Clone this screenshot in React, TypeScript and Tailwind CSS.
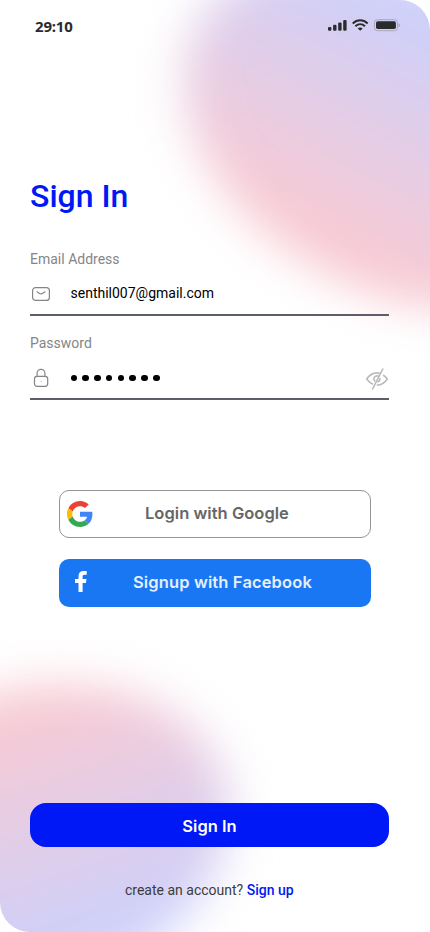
import React from "react";

function Backdrop() {
  return (
    <div className="pointer-events-none absolute inset-0">
      <div className="absolute left-[170px] top-[-25px] h-[316px] w-[456px] rotate-[28deg] rounded-[50%] bg-[linear-gradient(0deg,#f8cad3_10%,#ccd0fb_88%)] blur-[23px]" />
      <div className="absolute left-[-186px] top-[691px] h-[302px] w-[420px] rotate-[-18deg] rounded-[50%] bg-[linear-gradient(180deg,#f8cad3_8%,#ccd0fb_90%)] blur-[23px]" />
    </div>
  );
}

function StatusBar() {
  return (
    <header className="flex h-[54px] items-start justify-between pl-[35px] pr-[30px] pt-4">
      <span className="font-['Noto_Sans',sans-serif] text-[15px] font-bold leading-5 tracking-[-0.2px] text-[#2b2b2d]">29:10</span>
      <svg width="72" height="14" viewBox="0 0 72 14" className="mt-[2px]" fill="#2b2b2d">
        <rect x="0" y="8.9" width="3.4" height="3.9" rx="1.2" />
        <rect x="5.1" y="6.8" width="3.4" height="6" rx="1.2" />
        <rect x="10.2" y="4.4" width="3.4" height="8.4" rx="1.2" />
        <rect x="15.2" y="1.9" width="3.4" height="10.9" rx="1.2" />
        <g fill="none" stroke="#2b2b2d" strokeWidth="2">
          <path d="M24.7 5.4 C29.2 1.3 35.2 1.3 39.7 5.4" />
          <path d="M27.4 8.3 C30.3 5.6 34.1 5.6 37 8.3" />
        </g>
        <path d="M29.7 10.4 Q32.2 8.6 34.7 10.4 L32.2 12.8 Z" />
        <rect x="46.4" y="1.7" width="23.1" height="11" rx="3" fill="none" stroke="#a9a8b8" />
        <rect x="48" y="3.3" width="19.9" height="7.8" rx="1.8" />
        <path d="M70.5 5.2 Q72 5.7 72 7.2 Q72 8.7 70.5 9.2 Z" fill="#a9a8b8" />
      </svg>
    </header>
  );
}

function MailIcon() {
  return (
    <svg width="22" height="20" viewBox="0 0 22 20" fill="none" stroke="#858585" strokeWidth="1.2">
      <rect x="2.6" y="3.6" width="16.8" height="12.8" rx="3" />
      <path d="M7 7.8 L9.1 9.2 Q11 10.5 12.9 9.2 L15 7.8" strokeLinecap="round" />
    </svg>
  );
}

function LockIcon() {
  return (
    <svg width="22" height="22" viewBox="0 0 22 22" fill="none" stroke="#858585" strokeWidth="1.2">
      <rect x="4.5" y="9.3" width="13.2" height="10" rx="2.5" />
      <path d="M7.1 9.3 V6.2 A3.9 3.9 0 0 1 14.9 6.2 V9.3" />
      <circle cx="11.1" cy="14.2" r=".3" strokeWidth=".4" />
    </svg>
  );
}

function HiddenEyeIcon() {
  return (
    <svg width="24" height="24" viewBox="0 0 24 24" fill="none" stroke="#bababa" strokeWidth="1.6">
      <path d="M8 17.2 C5 16 2.8 13.5 1.7 12 C4.3 8.3 8 5.9 12 5.9 C13 5.9 14 6.1 14.8 6.4" />
      <path d="M18.2 8 C20 9.2 21.4 10.7 22.3 12 C19.8 15.8 16 18.2 11.8 18.1" />
      <path d="M10.2 14.4 A3 3 0 1 1 13.6 9.4" />
      <path d="M14.8 11 A3 3 0 0 1 12.4 14.9" />
      <path d="M17.8 2 L7.6 21.8" strokeLinecap="round" />
    </svg>
  );
}

function GoogleIcon() {
  return (
    <svg width="26" height="26" viewBox="0 0 48 48">
      <path fill="#EA4335" d="M24 9.5c3.54 0 6.71 1.22 9.21 3.6l6.85-6.85C35.9 2.38 30.47 0 24 0 14.62 0 6.51 5.38 2.56 13.22l7.98 6.19C12.43 13.72 17.74 9.5 24 9.5z" />
      <path fill="#4285F4" d="M46.98 24.55c0-1.57-.15-3.09-.38-4.55H24v9.02h12.94c-.58 2.96-2.26 5.48-4.78 7.18l7.73 6c4.51-4.18 7.09-10.36 7.09-17.65z" />
      <path fill="#FBBC05" d="M10.53 28.59c-.48-1.45-.76-2.99-.76-4.59s.27-3.14.76-4.59l-7.98-6.19C.92 16.46 0 20.12 0 24s.92 7.54 2.56 10.78l7.97-6.19z" />
      <path fill="#34A853" d="M24 48c6.48 0 11.93-2.13 15.89-5.81l-7.73-6c-2.15 1.45-4.92 2.3-8.16 2.3-6.26 0-11.57-4.22-13.47-9.91l-7.98 6.19C6.51 42.62 14.62 48 24 48z" />
    </svg>
  );
}

function FacebookIcon() {
  return (
    <svg width="12" height="21" viewBox="0 0 12 21" fill="#fff">
      <path d="M3.5 21 V11.9 H0 V8 H3.5 V5.3 C3.5 1.8 5.4 0 8.7 0 H11.7 V3.7 H9.6 C8 3.7 7.6 4.5 7.6 5.7 V8 H11.5 L10.9 11.9 H7.6 V21 Z" />
    </svg>
  );
}

export default function App() {
  return (
    <div className="h-[932px] w-[430px] bg-white font-[Roboto,sans-serif]">
      <main className="relative h-full w-full overflow-hidden rounded-[30px] bg-white">
        <Backdrop />
        <div className="relative flex h-full flex-col">
          <StatusBar />
          <h1 className="ml-[30px] mt-[122px] text-[32px] font-medium leading-10 text-[#0018f5]">Sign In</h1>

          <form className="ml-[30px] mt-[34px] w-[359px]" onSubmit={(e) => e.preventDefault()}>
            <div className="flex h-[66px] flex-col border-b-2 border-[#5f5d6b]">
              <span className="text-sm leading-[18px] text-[#868686]">Email Address</span>
              <div className="mt-4 flex h-5 items-center">
                <MailIcon />
                <span className="-mt-0.5 ml-[18.5px] text-sm leading-5 text-black">senthil007@gmail.com</span>
              </div>
            </div>
            <div className="mt-[18px] flex h-[66px] flex-col border-b-2 border-[#5f5d6b]">
              <span className="text-sm leading-[18px] text-[#868686]">Password</span>
              <div className="mt-3.5 flex h-6 items-center">
                <LockIcon />
                <div className="ml-[18.5px] flex gap-[5.3px]">
                  {Array.from({ length: 8 }, (_, i) => (
                    <i key={i} className="h-[6.5px] w-[6.5px] rounded-full bg-black" />
                  ))}
                </div>
                <div className="ml-auto mt-0.5">
                  <HiddenEyeIcon />
                </div>
              </div>
            </div>
          </form>

          <div className="ml-[59px] mt-[90px] flex w-[312px] flex-col gap-[21px] font-[Inter,sans-serif] text-[16.5px] font-semibold">
            <button className="flex h-12 items-center rounded-[10px] border border-[#959595] bg-white pl-[7px] text-[#666]">
              <GoogleIcon />
              <span className="-mt-0.5 ml-[52px] whitespace-nowrap tracking-[0.03px]">Login with Google</span>
            </button>
            <button className="flex h-12 items-center rounded-[10px] bg-[#1977f3] pl-4 text-[#e4efff]">
              <span className="-mt-[3px]">
                <FacebookIcon />
              </span>
              <span className="-mt-0.5 ml-[46px] whitespace-nowrap tracking-[0.13px]">Signup with Facebook</span>
            </button>
          </div>

          <button className="ml-[30px] mt-[196px] h-11 w-[359px] rounded-[16px] bg-[#0018f5] pt-0.5 font-[Inter,sans-serif] text-[16.5px] font-semibold text-white">Sign In</button>
          <p className="ml-[125px] mt-[33px] text-sm leading-5 text-[#3c3c3c]">
            create an account? <a className="font-medium text-[#0018f5]">Sign up</a>
          </p>
        </div>
      </main>
    </div>
  );
}
